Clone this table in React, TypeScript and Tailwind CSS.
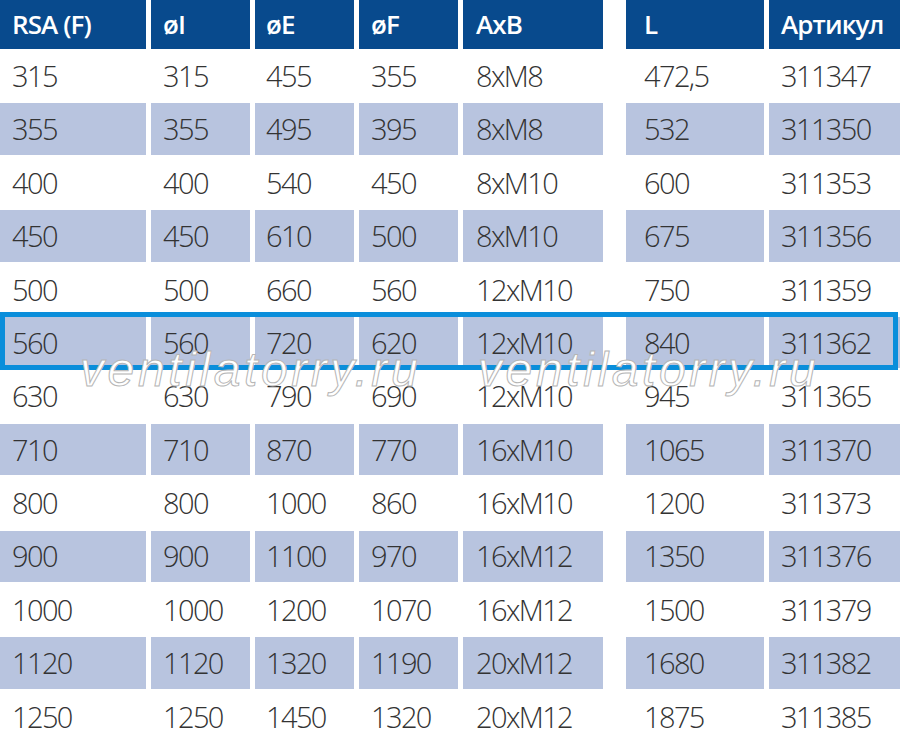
import React from "react";

const headers = ["RSA (F)", "øI", "øE", "øF", "AxB", "L", "Артикул"];
const rows: string[][] = [
  ["315", "315", "455", "355", "8xM8", "472,5", "311347"],
  ["355", "355", "495", "395", "8xM8", "532", "311350"],
  ["400", "400", "540", "450", "8xM10", "600", "311353"],
  ["450", "450", "610", "500", "8xM10", "675", "311356"],
  ["500", "500", "660", "560", "12xM10", "750", "311359"],
  ["560", "560", "720", "620", "12xM10", "840", "311362"],
  ["630", "630", "790", "690", "12xM10", "945", "311365"],
  ["710", "710", "870", "770", "16xM10", "1065", "311370"],
  ["800", "800", "1000", "860", "16xM10", "1200", "311373"],
  ["900", "900", "1100", "970", "16xM12", "1350", "311376"],
  ["1000", "1000", "1200", "1070", "16xM12", "1500", "311379"],
  ["1120", "1120", "1320", "1190", "20xM12", "1680", "311382"],
  ["1250", "1250", "1450", "1320", "20xM12", "1875", "311385"],
];

const widths = [
  "w-[146px]",
  "w-[99px]",
  "w-[99px]",
  "w-[99px]",
  "w-[140px]",
  "w-[138px] ml-[18px]",
  "w-[131px]",
];
const pads = ["pl-[12px]", "pl-[12px]", "pl-[11px]", "pl-[12px]", "pl-[13px]", "pl-[18px]", "pl-[12px]"];

export default function App() {
  return (
    <div
      className="relative w-[900px] h-[743px] overflow-hidden bg-white"
      style={{ fontFamily: '"Open Sans", "Noto Sans", sans-serif' }}
    >
      <div className="flex gap-[5px] h-[49px]">
        {headers.map((h, i) => (
          <div
            key={i}
            className={`${widths[i]} ${pads[i]} shrink-0 h-full bg-[#084a8d] text-white text-[26px] font-semibold tracking-[-0.9px] flex items-center`}
          >
            {h}
          </div>
        ))}
      </div>
      {rows.map((r, ri) => (
        <div key={ri} className="flex gap-[5px] h-[53.4px] py-[1px]">
          {r.map((c, ci) => (
            <div
              key={ci}
              className={`${widths[ci]} ${pads[ci]} shrink-0 h-full flex items-center text-[29px] font-light tracking-[-1.6px] text-[#333333] ${
                ri % 2 === 1 || ri === 5 ? "bg-[#b8c4df]" : "bg-white"
              }`}
            >
              {c}
            </div>
          ))}
        </div>
      ))}

      <div className="absolute left-0 top-[312px] w-[898px] h-[58px] border-[5px] border-[#0a8edb]" />

      <div
        className="absolute left-[80px] top-[334px] text-[48px] italic tracking-[3.6px] text-white [-webkit-text-stroke:1px_#b5b5b5] whitespace-nowrap"
        style={{ fontFamily: '"Liberation Sans", Arial, sans-serif' }}
      >
        ventilatorry.ru
      </div>
      <div
        className="absolute left-[478px] top-[334px] text-[48px] italic tracking-[3.6px] text-white [-webkit-text-stroke:1px_#b5b5b5] whitespace-nowrap"
        style={{ fontFamily: '"Liberation Sans", Arial, sans-serif' }}
      >
        ventilatorry.ru
      </div>
    </div>
  );
}
